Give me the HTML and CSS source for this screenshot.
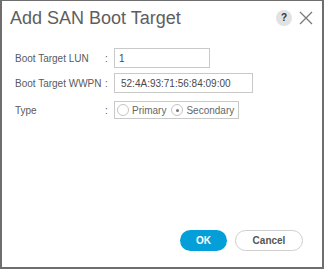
FILE: index.html
```html
<!DOCTYPE html>
<html>
<head>
  <link rel="stylesheet" href="styles.css">
</head>
<body>
  <div class="dialog">
    <div class="dialog-header">
      <h1 class="title">Add SAN Boot Target</h1>
      <div class="header-icons">
        <span class="help">?</span>
        <svg class="close" width="14" height="14" viewBox="0 0 14 14">
          <path d="M1 1 L13 13 M13 1 L1 13" stroke="#7a7a7a" stroke-width="1.3" fill="none"/>
        </svg>
      </div>
    </div>

    <div class="form">
      <div class="row row-lun">
        <span class="label">Boot Target LUN</span>
        <span class="colon">:</span>
        <input type="text" class="field field-lun" value="1">
      </div>
      <div class="row row-wwpn">
        <span class="label">Boot Target WWPN</span>
        <span class="colon">:</span>
        <input type="text" class="field field-wwpn" value="52:4A:93:71:56:84:09:00">
      </div>
      <div class="row row-type">
        <span class="label">Type</span>
        <span class="colon">:</span>
        <div class="radio-group">
          <label class="radio"><span class="dot"></span>Primary</label>
          <label class="radio checked"><span class="dot"></span>Secondary</label>
        </div>
      </div>
    </div>

    <div class="dialog-footer">
      <button class="btn btn-ok">OK</button>
      <button class="btn btn-cancel">Cancel</button>
    </div>
  </div>
</body>
</html>
```

FILE: styles.css
```css
body {
  margin: 0;
  font-family: 'Liberation Sans', Arial, sans-serif;
  background: #fff;
}

.dialog {
  width: 324px;
  height: 269px;
  box-sizing: border-box;
  border: 2px solid #6e6e6e;
  border-top-width: 1px;
  background: #fff;
  display: flex;
  flex-direction: column;
}

.dialog-header {
  display: flex;
  align-items: center;
  justify-content: space-between;
  height: 34px;
  padding: 0 9px 0 8px;
}

.title {
  margin: 0;
  font-size: 18px;
  font-weight: normal;
  color: #5e5e60;
}

.header-icons {
  display: flex;
  align-items: center;
  gap: 7px;
}

.help {
  width: 16px;
  height: 16px;
  border-radius: 50%;
  background: #e2e2e2;
  color: #333;
  font-size: 10px;
  font-weight: bold;
  line-height: 16px;
  text-align: center;
}

.form {
  padding: 13px 0 0 13px;
}

.row {
  display: flex;
  align-items: center;
  font-size: 10px;
  color: #5a5a5a;
}

.row-lun {
  height: 20px;
  margin-bottom: 5px;
}

.row-wwpn {
  height: 20px;
  margin-bottom: 8px;
}

.row-type {
  height: 18px;
}

.label {
  width: 90px;
}

.colon {
  width: 9px;
}

.field {
  height: 20px;
  box-sizing: border-box;
  border: 1px solid #c9c9c9;
  padding: 0 4px;
  font-family: inherit;
  font-size: 10px;
  color: #4a4a4a;
  outline: none;
}

.field-lun {
  width: 96px;
}

.field-wwpn {
  width: 139px;
  padding-left: 6px;
}

.radio-group {
  display: flex;
  align-items: center;
  gap: 5px;
  height: 18px;
  width: 125px;
  box-sizing: border-box;
  border: 1px solid #c9c9c9;
  padding-left: 2px;
}

.radio {
  display: flex;
  align-items: center;
  gap: 3px;
  color: #666;
}

.dot {
  width: 10px;
  height: 10px;
  border: 1px solid #c4c4c4;
  border-radius: 50%;
  position: relative;
}

.checked .dot::after {
  content: '';
  position: absolute;
  left: 3.5px;
  top: 3.5px;
  width: 3px;
  height: 3px;
  border-radius: 50%;
  background: #777;
}

.dialog-footer {
  margin-top: auto;
  display: flex;
  justify-content: flex-end;
  gap: 8px;
  padding: 0 19px 16px 0;
}

.btn {
  height: 21px;
  border-radius: 11px;
  font-family: inherit;
  font-size: 10px;
  font-weight: bold;
  padding: 0;
  cursor: pointer;
}

.btn-ok {
  width: 47px;
  border: none;
  background: #049fd9;
  color: #fff;
}

.btn-cancel {
  width: 68px;
  border: 1px solid #cfcfcf;
  background: #fff;
  color: #555;
}
```
